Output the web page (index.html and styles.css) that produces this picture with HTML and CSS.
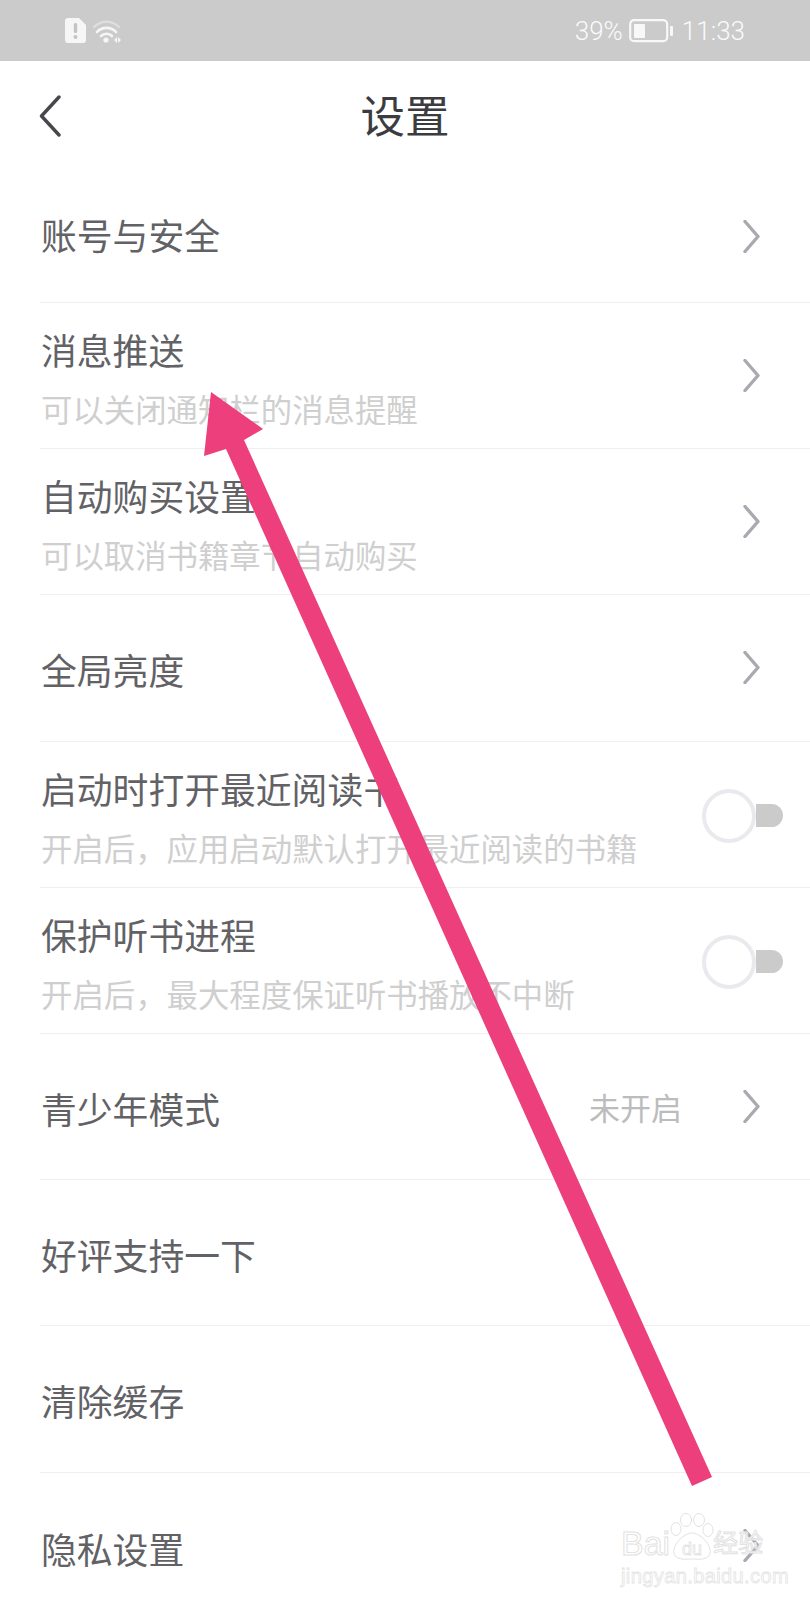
FILE: index.html
```html
<!DOCTYPE html>
<html lang="zh-CN">

<head>
    <meta charset="UTF-8">
    <title>设置</title>
    <link rel="stylesheet" href="styles.css">
</head>

<body>
    <div class="page">
        <!-- Status bar -->
        <div class="status-bar">
            <div class="status-left">
                <svg class="sim-icon" width="21" height="25" viewBox="0 0 21 25">
                    <path d="M3 0H14L21 7V22a3 3 0 0 1-3 3H3a3 3 0 0 1-3-3V3a3 3 0 0 1 3-3Z" fill="#f6f6f6" />
                    <rect x="8.8" y="5" width="3.4" height="10" rx="1.6" fill="#c4c4c4" />
                    <circle cx="10.5" cy="19" r="2" fill="#c4c4c4" />
                </svg>
                <svg class="wifi-icon" width="29" height="24" viewBox="0 0 29 24" fill="none">
                    <path d="M1 8C8 1 19 1 26 8" stroke="#dedede" stroke-width="2.4" stroke-linecap="round" />
                    <path d="M4 13C9 7.500 18 7.500 23 13" stroke="#f6f6f6" stroke-width="2.6" stroke-linecap="round" />
                    <path d="M8 17C11 14 16 14 19 17" stroke="#f6f6f6" stroke-width="2.6" stroke-linecap="round" />
                    <circle cx="13" cy="21" r="2.600" fill="#f6f6f6" />
                    <path d="M21 21L24 18V24Z M25 18L28 21L25 24Z" fill="#f6f6f6" />
                </svg>
            </div>
            <div class="status-right">
                <span>39%</span>
                <svg class="battery-icon" width="44" height="24" viewBox="0 0 44 24">
                    <rect x="1.200" y="1.200" width="37" height="21" rx="4" fill="none" stroke="#f8f8f8" stroke-width="2.200" />
                    <rect x="5" y="5" width="11" height="14" rx="1" fill="#f8f8f8" />
                    <rect x="41" y="7" width="3" height="10" rx="1" fill="#f8f8f8" />
                </svg>
                <span class="status-time">11:33</span>
            </div>
        </div>

        <!-- Title bar -->
        <div class="title-bar">
            <svg class="back-icon" width="22" height="42" viewBox="0 0 22 42" fill="none">
                <path d="M20 2L2.500 21L20 40" stroke="#48484c" stroke-width="3.400" stroke-linecap="round" stroke-linejoin="round" />
            </svg>
            <h1 class="page-title">设置</h1>
        </div>

        <!-- Settings list -->
        <div class="settings-list">
            <div class="row row-first">
                <div class="row-text"><div class="row-title">账号与安全</div></div>
                <svg class="chevron" width="17" height="33" viewBox="0 0 17 33" fill="none"><path d="M2 1.500L15 16.500L2 31.500" /></svg>
            </div>
            <div class="row">
                <div class="row-text two-line">
                    <div class="row-title">消息推送</div>
                    <div class="row-sub">可以关闭通知栏的消息提醒</div>
                </div>
                <svg class="chevron" width="17" height="33" viewBox="0 0 17 33" fill="none"><path d="M2 1.500L15 16.500L2 31.500" /></svg>
            </div>
            <div class="row">
                <div class="row-text two-line">
                    <div class="row-title">自动购买设置</div>
                    <div class="row-sub">可以取消书籍章节自动购买</div>
                </div>
                <svg class="chevron" width="17" height="33" viewBox="0 0 17 33" fill="none"><path d="M2 1.500L15 16.500L2 31.500" /></svg>
            </div>
            <div class="row">
                <div class="row-text"><div class="row-title">全局亮度</div></div>
                <svg class="chevron" width="17" height="33" viewBox="0 0 17 33" fill="none"><path d="M2 1.500L15 16.500L2 31.500" /></svg>
            </div>
            <div class="row">
                <div class="row-text two-line">
                    <div class="row-title">启动时打开最近阅读书</div>
                    <div class="row-sub">开启后，应用启动默认打开最近阅读的书籍</div>
                </div>
                <div class="switch"><span class="switch-knob"></span><span class="switch-track"></span></div>
            </div>
            <div class="row">
                <div class="row-text two-line">
                    <div class="row-title">保护听书进程</div>
                    <div class="row-sub">开启后，最大程度保证听书播放不中断</div>
                </div>
                <div class="switch"><span class="switch-knob"></span><span class="switch-track"></span></div>
            </div>
            <div class="row">
                <div class="row-text"><div class="row-title">青少年模式</div></div>
                <span class="row-value">未开启</span>
                <svg class="chevron" width="17" height="33" viewBox="0 0 17 33" fill="none"><path d="M2 1.500L15 16.500L2 31.500" /></svg>
            </div>
            <div class="row">
                <div class="row-text"><div class="row-title">好评支持一下</div></div>
            </div>
            <div class="row">
                <div class="row-text"><div class="row-title">清除缓存</div></div>
            </div>
            <div class="row row-last">
                <div class="row-text"><div class="row-title">隐私设置</div></div>
                <svg class="chevron" width="17" height="33" viewBox="0 0 17 33" fill="none"><path d="M2 1.500L15 16.500L2 31.500" /></svg>
            </div>
        </div>

        <!-- Pink arrow drawn over the screenshot -->
        <svg class="annotation" width="810" height="1600" viewBox="0 0 810 1600">
            <polygon points="211,392 263,429 244,440 712,1477 692,1486 226,449 204,456" fill="#ec3f7c" />
        </svg>

        <!-- Baidu watermark -->
        <div class="watermark">
            <div class="watermark-top">
                <span class="wm-text">Bai</span>
                <svg class="wm-paw" width="44" height="50" viewBox="0 0 44 50" fill="#fff" stroke="#e2e2e2" stroke-width="1">
                    <ellipse cx="6" cy="16" rx="5" ry="6.500" />
                    <ellipse cx="16" cy="7" rx="5.500" ry="6.500" />
                    <ellipse cx="29" cy="7" rx="5.500" ry="6.500" />
                    <ellipse cx="38" cy="17" rx="5" ry="6.500" />
                    <path d="M22 20C30 20 42 32 40 40C38 48 28 46 22 46C16 46 6 48 4 40C2 32 14 20 22 20Z" />
                    <text x="22" y="42" text-anchor="middle" class="wm-du">du</text>
                </svg>
                <span class="wm-text wm-cn">经验</span>
            </div>
            <div class="wm-url">jingyan.baidu.com</div>
        </div>
    </div>
</body>

</html>
```

FILE: styles.css
```css
/* Reset and page */
html,
body {
    margin: 0;
    padding: 0;
    background-color: #ffffff;
}

.page {
    position: relative;
    width: 810px;
    height: 1600px;
    overflow: hidden;
    font-family: "Noto Sans CJK SC", "Noto Sans", sans-serif;
}

/* Status bar */
.status-bar {
    display: flex;
    justify-content: space-between;
    align-items: center;
    height: 61px;
    padding: 0 65px;
    box-sizing: border-box;
    background-color: #cbcbcb;
    color: #fafafa;
    font-family: Roboto, sans-serif;
    font-weight: 300;
    font-size: 26px;
}

.status-left {
    display: flex;
    align-items: center;
    gap: 7px;
}

.status-right {
    display: flex;
    align-items: center;
}

.battery-icon {
    margin-left: 6px;
}

.status-time {
    margin-left: 9px;
}

/* Title bar */
.title-bar {
    position: relative;
    display: flex;
    align-items: center;
    justify-content: center;
    height: 110px;
}

.back-icon {
    position: absolute;
    left: 39px;
    top: 34px;
}

.page-title {
    margin: 0 0 5px;
    font-size: 44.500px;
    font-weight: 400;
    color: #3c3c40;
}

/* Settings rows */
.row {
    display: flex;
    align-items: center;
    height: 146.200px;
    margin-left: 40px;
    padding-right: 27px;
    box-sizing: border-box;
    border-bottom: 1.5px solid #efefef;
}

.row-first {
    height: 132px;
}

.row-text {
    flex: 1;
    padding-top: 2px;
    padding-left: 1px;
}

.row-first .row-text {
    padding-top: 0;
    padding-bottom: 5px;
}

.row-last .row-text {
    padding-top: 5px;
}

.row-text.two-line {
    align-self: flex-start;
    padding-top: 21px;
}

.row-title {
    font-size: 35.800px;
    line-height: 50px;
    color: #626266;
}

.row-sub {
    margin-top: 10px;
    font-size: 31.400px;
    line-height: 50px;
    color: #cfcfcf;
}

.row-value {
    margin-right: 61px;
    font-size: 31px;
    color: #bcbcbc;
}

.chevron {
    margin-right: 23px;
}

.chevron path {
    stroke: #a8aab0;
    stroke-width: 3.400;
    stroke-linecap: round;
    stroke-linejoin: round;
}

/* Switch, off state */
.switch {
    display: flex;
    align-items: center;
    margin-top: 3px;
}

.switch-knob {
    width: 54px;
    height: 54px;
    box-sizing: border-box;
    border: 4px solid #e9eaed;
    border-radius: 50%;
    background-color: #ffffff;
}

.switch-track {
    width: 27px;
    height: 23px;
    border-radius: 0 12px 12px 0;
    background-color: #cbcbcb;
}

/* Annotation and watermark lie over the list */
.annotation {
    position: absolute;
    left: 0;
    top: 0;
}

.watermark {
    position: absolute;
    left: 621px;
    top: 1513px;
    width: 150px;
}

.watermark-top {
    display: flex;
    align-items: flex-end;
    height: 50px;
}

.wm-text {
    font-family: "Liberation Sans", sans-serif;
    font-size: 34px;
    line-height: 40px;
    color: rgba(255, 255, 255, 0.85);
    -webkit-text-stroke: 1px #e2e2e2;
}

.wm-cn {
    margin-left: -1px;
    font-family: "Noto Sans CJK SC", sans-serif;
    font-size: 25px;
    line-height: 44px;
}

.wm-du {
    font-family: "Liberation Sans", sans-serif;
    font-size: 18px;
    stroke-width: 0.8;
}

.wm-url {
    margin-top: 2px;
    font-family: "Liberation Sans", sans-serif;
    font-size: 20px;
    line-height: 22px;
    letter-spacing: 0.4px;
    color: rgba(255, 255, 255, 0.85);
    -webkit-text-stroke: 0.8px #e4e4e4;
}
```
